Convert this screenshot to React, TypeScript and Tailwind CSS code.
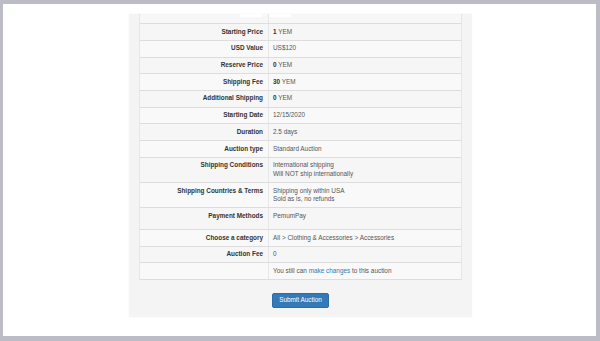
type Row = { label: string; value: React.ReactNode; extra?: boolean };

const rows: Row[] = [
  { label: "Starting Price", value: <><b className="text-[#333]">1</b> YEM</> },
  { label: "USD Value", value: "US$120" },
  { label: "Reserve Price", value: <><b className="text-[#333]">0</b> YEM</> },
  { label: "Shipping Fee", value: <><b className="text-[#333]">30</b> YEM</> },
  { label: "Additional Shipping", value: <><b className="text-[#333]">0</b> YEM</> },
  { label: "Starting Date", value: "12/15/2020" },
  { label: "Duration", value: "2.5 days" },
  { label: "Auction type", value: "Standard Auction" },
  { label: "Shipping Conditions", value: <>International shipping<br />Will NOT ship internationally</> },
  { label: "Shipping Countries & Terms", value: <>Shipping only within USA<br />Sold as is, no refunds</> },
  { label: "Payment Methods", value: "PemumPay", extra: true },
  { label: "Choose a category", value: "All > Clothing & Accessories > Accessories" },
  { label: "Auction Fee", value: "0" },
  {
    label: "",
    value: (
      <>
        You still can <span className="text-[#337ab7]">make changes</span> to this auction
      </>
    ),
  },
];

export default function App() {
  return (
    <div
      className="w-[600px] h-[341px] bg-[#bbbcc5] pt-[4px] pl-[3px] pr-[4px] pb-[5px]"
      style={{ fontFamily: '"Liberation Sans", Arial, sans-serif' }}
    >
      <div className="h-full bg-white pt-[10px]">
        <div className="ml-[126px] w-[343px] bg-[#f4f4f4] px-[10px] pb-[9px] shadow-[0_0_1px_rgba(0,0,0,0.08)]">
          <div className="border-x border-[#e6e6e6] text-[6.4px] leading-[8.67px]">
            {/* partially visible row above */}
            <div className="grid grid-cols-[129px_1fr] h-[9.3px] bg-[#f7f7f7]">
              <div className="border-r border-[#e6e6e6] relative">
                <div className="absolute top-0 left-[100px] w-[22px] h-[3px] bg-white" />
              </div>
              <div className="relative">
                <div className="absolute top-0 left-[0px] w-[22px] h-[3px] bg-white" />
              </div>
            </div>
            {rows.map((r, i) => (
              <div
                key={i}
                className={
                  "grid grid-cols-[129px_1fr] border-t border-[#dddddd] " +
                  (i % 2 === 0 ? "bg-[#f6f6f6]" : "bg-[#f9f9f9]")
                }
              >
                <div
                  className={
                    "border-r border-[#e6e6e6] text-right font-bold text-[#333] pr-[5px] pt-[3.5px] " +
                    (r.extra ? "pb-[8.5px]" : "pb-[3.5px]")
                  }
                >
                  {r.label}
                </div>
                <div className="pl-[4px] pt-[3.5px] pb-[3.5px] text-[#555]">{r.value}</div>
              </div>
            ))}
            <div className="border-t border-[#dddddd]" />
          </div>
          <div className="flex justify-center pt-[13px]">
            <button className="h-[14.5px] px-[6px] rounded-[2px] bg-[#337ab7] border border-[#2e6da4] text-white text-[6.4px] leading-none">
              Submit Auction
            </button>
          </div>
        </div>
      </div>
    </div>
  );
}
